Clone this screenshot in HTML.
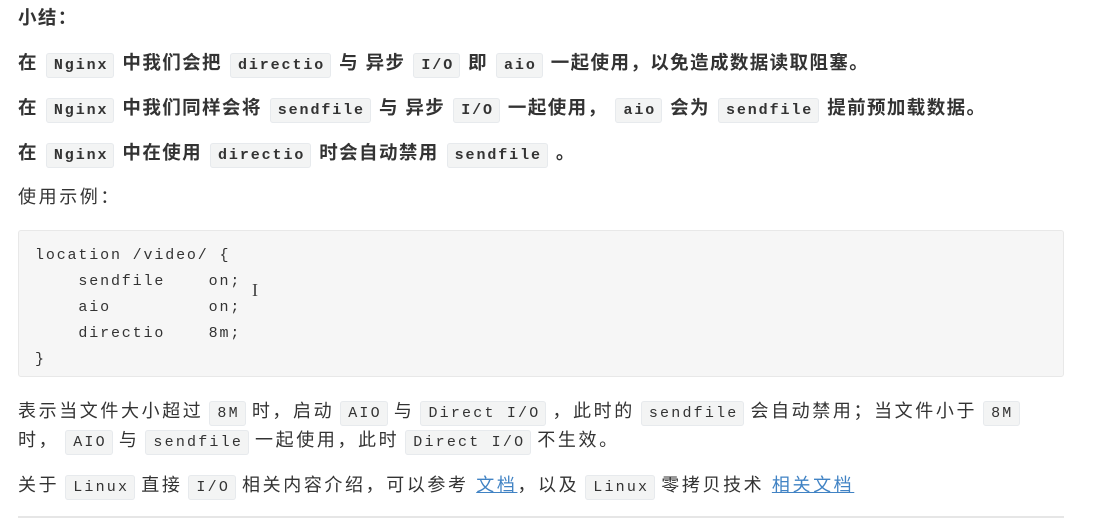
<!DOCTYPE html>
<html><head><meta charset="utf-8"><style>
html,body{margin:0;padding:0;background:#fff;width:1118px;height:525px;overflow:hidden}
body{font-family:"Liberation Sans","Noto Sans CJK SC",sans-serif;color:#333;font-size:18px}
.l{position:absolute;left:18px;white-space:nowrap;line-height:24px;letter-spacing:2.6px}
.b{font-weight:bold;font-size:18.5px;letter-spacing:1.4px}
code{font-family:"Liberation Mono","Noto Sans CJK SC",monospace;font-size:15px;letter-spacing:2.2px;background:#f3f4f4;border:1px solid #e7eaed;border-radius:3px;padding:3px 5px 3px 7px;margin:0 6px}
.b code{font-weight:bold;font-size:15px;letter-spacing:1.9px;margin:0 8px}
pre{position:absolute;left:18px;top:230px;width:1046px;height:147px;margin:0;box-sizing:border-box;background:#f6f6f6;border:1px solid #e8e8e8;border-radius:3px;padding:12px 16px;font-family:"Liberation Mono",monospace;font-size:15px;letter-spacing:1.85px;line-height:26px;color:#333}
a{color:#4183c4;text-decoration:underline}
hr{position:absolute;left:18px;top:516px;width:1046px;margin:0;border:0;border-top:2px solid #e6e6e6}
</style></head><body>
<div class="l b" style="top:6px">小结：</div>
<div class="l b" style="top:51px">在<code>Nginx</code>中我们会把<code>directio</code>与 异步<code>I/O</code>即<code>aio</code>一起使用，以免造成数据读取阻塞。</div>
<div class="l b" style="top:96px">在<code>Nginx</code>中我们同样会将<code>sendfile</code>与 异步<code>I/O</code>一起使用，<code>aio</code>会为<code>sendfile</code>提前预加载数据。</div>
<div class="l b" style="top:141px">在<code>Nginx</code>中在使用<code>directio</code>时会自动禁用<code>sendfile</code>。</div>
<div class="l" style="top:185px">使用示例：</div>
<pre>location /video/ {
    sendfile    on;
    aio         on;
    directio    8m;
}</pre>
<div style="position:absolute;left:252px;top:280px;font-size:18px;color:#444;font-family:'Liberation Serif',serif">I</div>
<div class="l" style="top:399px">表示当文件大小超过<code>8M</code>时，启动<code>AIO</code>与<code>Direct I/O</code>，此时的<code>sendfile</code>会自动禁用；当文件小于<code>8M</code></div>
<div class="l" style="top:428px">时，<code>AIO</code>与<code>sendfile</code>一起使用，此时<code>Direct I/O</code>不生效。</div>
<div class="l" style="top:473px">关于<code>Linux</code>直接<code>I/O</code>相关内容介绍，可以参考 <a>文档</a>，以及<code>Linux</code>零拷贝技术 <a>相关文档</a></div>
<hr>
</body></html>
